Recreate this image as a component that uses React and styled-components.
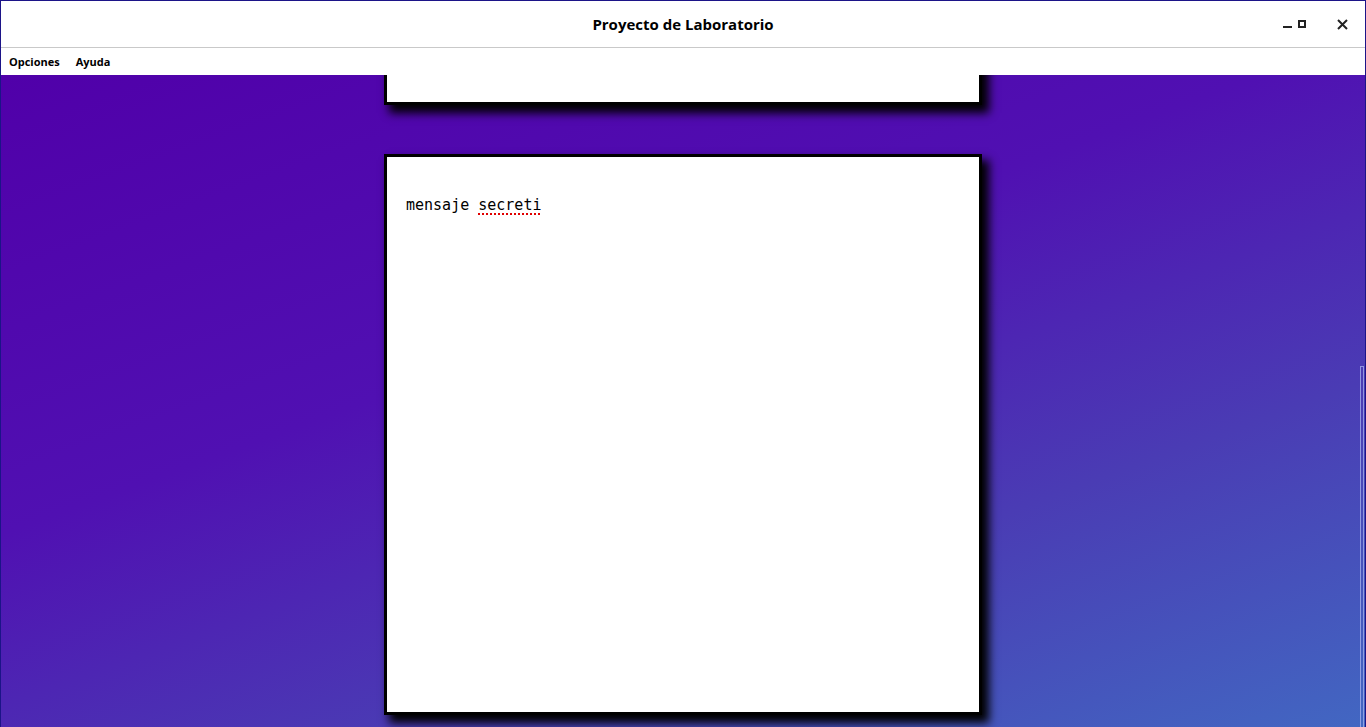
import React from "react";
import styled, { createGlobalStyle } from "styled-components";

const GlobalStyle = createGlobalStyle`
  html, body {
    margin: 0;
    padding: 0;
    overflow: hidden;
  }
  body {
    font-family: "Open Sans", "Noto Sans", sans-serif;
  }
`;

const Frame = styled.div`
  width: 1366px;
  height: 727px;
  box-sizing: border-box;
  border: 1px solid #1c1488;
  border-bottom: none;
  display: flex;
  flex-direction: column;
  background: #fff;
`;

const TitleBar = styled.div`
  height: 46px;
  flex-shrink: 0;
  display: grid;
  grid-template-columns: 1fr auto 1fr;
  align-items: center;
  border-bottom: 1px solid #c9c9c9;
`;

const Title = styled.div`
  grid-column: 2;
  font-weight: 700;
  font-size: 15px;
  color: #000;
  padding-bottom: 1px;
`;

const Controls = styled.div`
  grid-column: 3;
  justify-self: end;
  display: flex;
  align-items: center;
  height: 100%;
`;

const ControlButton = styled.div`
  width: ${(p) => p.$w}px;
  margin-right: ${(p) => p.$mr || 0}px;
  height: 100%;
  display: flex;
  align-items: center;
  justify-content: center;
`;

const MenuBar = styled.div`
  height: 27px;
  flex-shrink: 0;
  display: flex;
  align-items: center;
  gap: 16px;
  padding: 0 8px 1px;
  box-sizing: border-box;
  font-size: 11px;
  font-weight: 700;
  color: #000;
`;

const MenuItem = styled.span`
  cursor: default;
`;

const Viewport = styled.div`
  flex: 1;
  position: relative;
  overflow: hidden;
  background: linear-gradient(160deg, #5000a9 0%, #5010b2 40%, #4a3cb4 70%, #4267c2 100%);
`;

const Scroller = styled.div`
  display: flex;
  flex-direction: column;
  align-items: center;
  gap: 49px;
`;

const Card = styled.div`
  width: 598px;
  height: ${(p) => p.$h}px;
  box-sizing: border-box;
  background: #fff;
  border: 3px solid #000;
  box-shadow: 6px 7px 9px 1px #000;
  padding: 39px 19px;
  flex-shrink: 0;
`;

const Message = styled.div`
  font-family: "DejaVu Sans Mono", "Liberation Mono", monospace;
  font-size: 15px;
  color: #000;
  white-space: pre;
`;

const Misspelled = styled.span`
  text-decoration: underline dotted #e00000;
  text-decoration-thickness: 2px;
  text-underline-offset: 3px;
`;

const ScrollThumb = styled.div`
  position: absolute;
  right: 1px;
  top: 291px;
  bottom: 0;
  width: 2px;
  border: 1px solid rgba(170, 180, 240, 0.75);
  border-bottom: none;
`;

export default function App() {
  const scrollTop = 531;
  return (
    <>
      <GlobalStyle />
      <Frame>
        <TitleBar>
          <Title>Proyecto de Laboratorio</Title>
          <Controls>
            <ControlButton $w={12} $mr={4}>
              <svg width="10" height="10" viewBox="0 0 10 10">
                <rect x="0" y="7" width="9" height="2" fill="#222" />
              </svg>
            </ControlButton>
            <ControlButton $w={8} $mr={13}>
              <svg width="8" height="8" viewBox="0 0 8 8">
                <rect x="1" y="1" width="6" height="6" fill="none" stroke="#222" strokeWidth="2" />
              </svg>
            </ControlButton>
            <ControlButton $w={46}>
              <svg width="11" height="11" viewBox="0 0 11 11">
                <path d="M1 1L10 10M10 1L1 10" stroke="#222" strokeWidth="2" />
              </svg>
            </ControlButton>
          </Controls>
        </TitleBar>
        <MenuBar>
          <MenuItem>Opciones</MenuItem>
          <MenuItem>Ayuda</MenuItem>
        </MenuBar>
        <Viewport>
          <Scroller style={{ transform: `translateY(${-scrollTop}px)` }}>
            <Card $h={561} />
            <Card $h={561}>
              <Message>
                mensaje <Misspelled>secreti</Misspelled>
              </Message>
            </Card>
          </Scroller>
          <ScrollThumb />
        </Viewport>
      </Frame>
    </>
  );
}
